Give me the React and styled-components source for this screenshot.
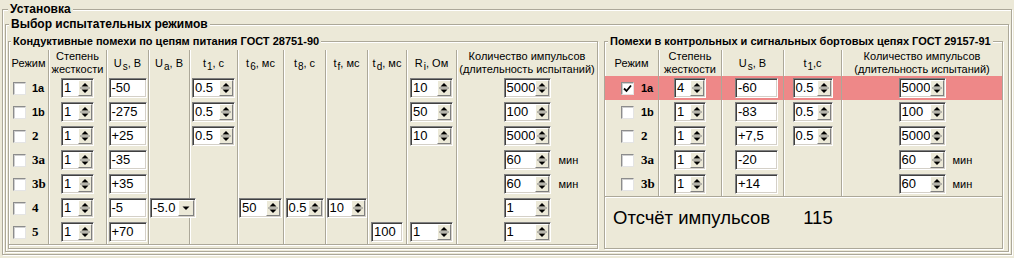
import React from "react";
import styled, { createGlobalStyle } from "styled-components";

const colors = {
  face: "#ECE9D8",
  line: "#ACA899",
  light: "#FFFFFF",
  dark: "#808080",
  darker: "#404040",
  soft: "#D4D0C8",
  alert: "#EE8888",
};

const sans = '"Liberation Sans", Arial, sans-serif';
const serif = '"Liberation Serif", "Times New Roman", serif';

const GlobalStyle = createGlobalStyle`
  html, body {
    margin: 0;
    padding: 0;
    background: ${colors.face};
  }
  body {
    width: 1014px;
    height: 258px;
    overflow: hidden;
    font-family: ${sans};
    color: #000;
  }
`;

const Frame = styled.fieldset`
  box-sizing: border-box;
  min-width: 0;
  margin: ${({ $margin }) => $margin || 0};
  padding: ${({ $padding }) => $padding || 0};
  border: 1px solid ${colors.line};
  box-shadow: inset 1px 1px 0 ${colors.light}, 1px 1px 0 ${colors.light};
  ${({ $width }) => $width && `width: ${$width}px; flex: none;`}
`;

const Legend = styled.legend`
  margin-left: ${({ $indent }) => $indent}px;
  padding: 0 2px;
  font-weight: bold;
  font-size: ${({ $size }) => $size}px;
  line-height: ${({ $size }) => $size + 2}px;
  background: ${colors.face};
`;

const Groups = styled.div`
  display: flex;
  gap: 6px;
  align-items: stretch;
`;

const Grid = styled.div`
  display: grid;
  grid-template-columns: ${({ $cols }) => $cols.map((c) => `${c}px`).join(" ")};
  grid-template-rows: 26px repeat(${({ $rows }) => $rows}, 24px);
  border-bottom: 1px solid ${colors.line};
  box-shadow: 0 1px 0 ${colors.light};
`;

const Cell = styled.div`
  display: flex;
  align-items: center;
  justify-content: ${({ $justify }) => $justify || "center"};
  padding-left: ${({ $pad }) => $pad || 0}px;
  min-width: 0;
  border-right: ${({ $last }) => ($last ? "0" : `1px solid ${colors.line}`)};
  box-shadow: ${({ $last }) => ($last ? "none" : `1px 0 0 ${colors.light}`)};
  background: ${({ $active }) => ($active ? colors.alert : "transparent")};
`;

const Head = styled(Cell)`
  justify-content: center;
  padding-left: 0;
  text-align: center;
  font-size: 11px;
  line-height: 13px;
  white-space: nowrap;
`;

const Sub = styled.span`
  display: inline-block;
  font-size: 10px;
  line-height: 10px;
  margin-left: 1px;
  transform: translateY(4px);
`;

const Field = styled.div`
  box-sizing: border-box;
  flex: none;
  display: flex;
  width: ${({ $w }) => $w}px;
  height: 20px;
  padding: 1px;
  background: #fff;
  border: 1px solid;
  border-color: ${colors.dark} ${colors.light} ${colors.light} ${colors.dark};
  box-shadow: inset 1px 1px 0 ${colors.darker}, inset -1px -1px 0 ${colors.soft};
  font-size: 13px;
`;

const Value = styled.span`
  flex: 1;
  min-width: 0;
  padding-left: 1px;
  line-height: 16px;
  white-space: nowrap;
  overflow: hidden;
`;

const ArrowButton = styled.span`
  box-sizing: border-box;
  flex: none;
  width: ${({ $w }) => $w}px;
  height: 16px;
  display: flex;
  align-items: center;
  justify-content: center;
  background: ${colors.face};
  border: 1px solid;
  border-color: ${colors.light} ${colors.dark} ${colors.dark} ${colors.light};
`;

const Box = styled.span`
  box-sizing: border-box;
  flex: none;
  width: 13px;
  height: 13px;
  display: inline-flex;
  align-items: center;
  justify-content: center;
  background: #fff;
  border: 1px solid;
  border-color: #8c8c8c #e4e4e4 #e4e4e4 #8c8c8c;
  box-shadow: inset 1px 1px 0 #cfcfcf;
`;

const ModeWrap = styled.div`
  display: flex;
  align-items: center;
  gap: ${({ $gap }) => $gap}px;
`;

const ModeName = styled.span`
  font-weight: bold;
  font-family: ${({ $serif }) => ($serif ? serif : sans)};
  font-size: ${({ $serif }) => ($serif ? 13 : 11)}px;
`;

const CountWrap = styled.div`
  width: 100%;
  display: grid;
  grid-template-columns: 1fr auto 1fr;
  align-items: center;
`;

const Unit = styled.span`
  padding-left: ${({ $gap }) => $gap}px;
  font-size: 11px;
`;

const Counter = styled.div`
  display: flex;
  gap: 33px;
  padding: 10px 0 0 8px;
  font-size: 18.5px;
  line-height: 22px;
`;

const Sym = ({ base, sub, unit }) => (
  <>
    {base}
    <Sub>{sub}</Sub>
    {unit}
  </>
);

const Spin = ({ value, w }) => (
  <Field $w={w}>
    <Value>{value}</Value>
    <ArrowButton $w={14}>
      <svg width="12" height="14" viewBox="0 0 12 14">
        <polygon points="2.5,5.5 6,2 9.5,5.5" fill="#000" />
        <line x1="1" y1="7" x2="11" y2="7" stroke={colors.dark} />
        <polygon points="2.5,8.5 9.5,8.5 6,12" fill="#000" />
      </svg>
    </ArrowButton>
  </Field>
);

const Text = ({ value, w }) => (
  <Field $w={w}>
    <Value>{value}</Value>
  </Field>
);

const Drop = ({ value, w }) => (
  <Field $w={w}>
    <Value>{value}</Value>
    <ArrowButton $w={16}>
      <svg width="14" height="14" viewBox="0 0 14 14">
        <polygon points="3.5,5.5 10.5,5.5 7,9" fill="#000" />
      </svg>
    </ArrowButton>
  </Field>
);

const Count = ({ value, unit, gap }) => (
  <CountWrap>
    <span />
    <Spin value={value} w={47} />
    <Unit $gap={gap}>{unit}</Unit>
  </CountWrap>
);

const Mode = ({ row, gap }) => (
  <ModeWrap $gap={gap}>
    <Box>
      {row.checked && (
        <svg width="9" height="9" viewBox="0 0 9 9">
          <path d="M1 4.5 L3.5 7 L8 1.5" stroke="#000" strokeWidth="1.8" fill="none" />
        </svg>
      )}
    </Box>
    <ModeName $serif={row.serif}>{row.id}</ModeName>
  </ModeWrap>
);

const Table = ({ columns, rows, gap }) => (
  <Grid $cols={columns.map((c) => c.w)} $rows={rows.length}>
    {columns.map((col, i) => (
      <Head key={`h${i}`} $last={i === columns.length - 1}>
        {col.head}
      </Head>
    ))}
    {rows.map((row) =>
      columns.map((col, i) => (
        <Cell
          key={`${row.id}-${i}`}
          $last={i === columns.length - 1}
          $active={row.active}
          $justify={col.justify}
          $pad={col.pad}
        >
          {i === 0 ? <Mode row={row} gap={gap} /> : row.cells[i - 1]}
        </Cell>
      ))
    )}
  </Grid>
);

const countHead = (
  <>
    Количество импульсов
    <br />
    (длительность испытаний)
  </>
);

const leftColumns = [
  { w: 40, head: "Режим", justify: "flex-start", pad: 4 },
  { w: 58, head: <>Степень<br />жесткости</> },
  { w: 42, head: <Sym base="U" sub="s" unit=", В" /> },
  { w: 41, head: <Sym base="U" sub="a" unit=", В" />, justify: "flex-start", pad: 1 },
  { w: 48, head: <Sym base="t" sub="1" unit=", с" /> },
  { w: 46, head: <Sym base="t" sub="6" unit=", мс" /> },
  { w: 42, head: <Sym base="t" sub="8" unit=", с" /> },
  { w: 42, head: <Sym base="t" sub="f" unit=", мс" /> },
  { w: 39, head: <Sym base="t" sub="d" unit=", мс" /> },
  { w: 50, head: <Sym base="R" sub="i" unit=", Ом" /> },
  { w: 140, head: countHead, justify: "stretch" },
];

const leftRows = [
  {
    id: "1a",
    cells: [<Spin value="1" w={33} />, <Text value="-50" w={38} />, null, <Spin value="0.5" w={43} />, null, null, null, null, <Spin value="10" w={43} />, <Count value="5000" gap={8} />],
  },
  {
    id: "1b",
    cells: [<Spin value="1" w={33} />, <Text value="-275" w={38} />, null, <Spin value="0.5" w={43} />, null, null, null, null, <Spin value="50" w={43} />, <Count value="100" gap={8} />],
  },
  {
    id: "2",
    serif: true,
    cells: [<Spin value="1" w={33} />, <Text value="+25" w={38} />, null, <Spin value="0.5" w={43} />, null, null, null, null, <Spin value="10" w={43} />, <Count value="5000" gap={8} />],
  },
  {
    id: "3a",
    serif: true,
    cells: [<Spin value="1" w={33} />, <Text value="-35" w={38} />, null, null, null, null, null, null, null, <Count value="60" unit="мин" gap={8} />],
  },
  {
    id: "3b",
    serif: true,
    cells: [<Spin value="1" w={33} />, <Text value="+35" w={38} />, null, null, null, null, null, null, null, <Count value="60" unit="мин" gap={8} />],
  },
  {
    id: "4",
    serif: true,
    cells: [<Spin value="1" w={33} />, <Text value="-5" w={38} />, <Drop value="-5.0" w={46} />, null, <Spin value="50" w={43} />, <Spin value="0.5" w={38} />, <Spin value="10" w={40} />, null, null, <Count value="1" gap={8} />],
  },
  {
    id: "5",
    serif: true,
    cells: [<Spin value="1" w={33} />, <Text value="+70" w={38} />, null, null, null, null, null, <Text value="100" w={32} />, <Spin value="1" w={43} />, <Count value="1" gap={8} />],
  },
];

const rightColumns = [
  { w: 54, head: "Режим", justify: "flex-start", pad: 16 },
  { w: 63, head: <>Степень<br />жесткости</> },
  { w: 62, head: <Sym base="U" sub="s" unit=", В" />, justify: "flex-start", pad: 13 },
  { w: 58, head: <Sym base="t" sub="1" unit=",с" /> },
  { w: 160, head: countHead, justify: "stretch" },
];

const rightRows = [
  {
    id: "1a",
    checked: true,
    active: true,
    cells: [<Spin value="4" w={32} />, <Text value="-60" w={43} />, <Spin value="0.5" w={40} />, <Count value="5000" gap={7} />],
  },
  {
    id: "1b",
    cells: [<Spin value="1" w={32} />, <Text value="-83" w={43} />, <Spin value="0.5" w={40} />, <Count value="100" gap={7} />],
  },
  {
    id: "2",
    serif: true,
    cells: [<Spin value="1" w={32} />, <Text value="+7,5" w={43} />, <Spin value="0.5" w={40} />, <Count value="5000" gap={7} />],
  },
  {
    id: "3a",
    serif: true,
    cells: [<Spin value="1" w={32} />, <Text value="-20" w={43} />, null, <Count value="60" unit="мин" gap={7} />],
  },
  {
    id: "3b",
    serif: true,
    cells: [<Spin value="1" w={32} />, <Text value="+14" w={43} />, null, <Count value="60" unit="мин" gap={7} />],
  },
];

const App = () => {
  return (
    <>
      <GlobalStyle />
      <Frame $margin="2px 2px 0 2px" $padding="1px 2px 2px 2px">
        <Legend $indent={3} $size={12}>Установка</Legend>
        <Frame $padding="4px 2px 2px 2px">
          <Legend $indent={1} $size={12}>Выбор испытательных режимов</Legend>
          <Groups>
            <Frame $width={590} $padding="2px 0 3px 0">
              <Legend $indent={2} $size={11}>
                Кондуктивные помехи по цепям питания ГОСТ 28751-90
              </Legend>
              <Table columns={leftColumns} rows={leftRows} gap={6} />
            </Frame>
            <Frame $width={399} $padding="2px 0 3px 0">
              <Legend $indent={3} $size={11}>
                Помехи в контрольных и сигнальных бортовых цепях ГОСТ 29157-91
              </Legend>
              <Table columns={rightColumns} rows={rightRows} gap={7} />
              <Counter>
                <span>Отсчёт импульсов</span>
                <span>115</span>
              </Counter>
            </Frame>
          </Groups>
        </Frame>
      </Frame>
    </>
  );
};

export default App;
